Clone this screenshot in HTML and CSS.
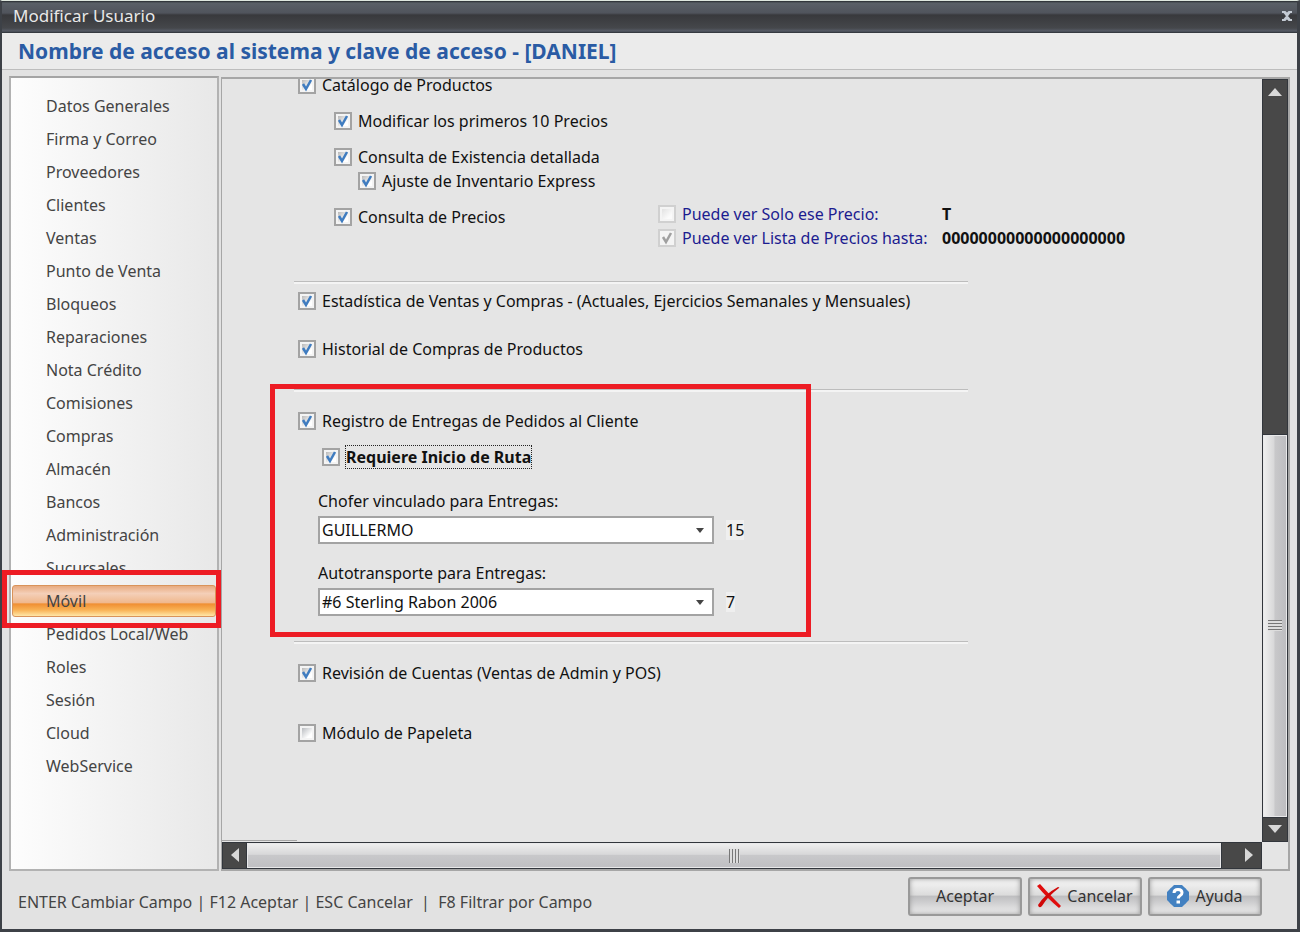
FILE: index.html
```
<!DOCTYPE html>
<html lang="es">
<head>
    <meta charset="utf-8">
    <title>Modificar Usuario</title>
    <link rel="stylesheet" href="styles.css">
</head>
<body>
    <div class="window">
        <div class="titlebar">
            <span>Modificar Usuario</span>
            <button class="close" aria-label="Cerrar">
                <svg width="12" height="10" viewBox="0 0 12 10"><path d="M1 1h3l2 2 2-2h3M1 9h3l2-2 2 2h3M3 1l6 8M9 1L3 9" fill="none" stroke="#c3cad3" stroke-width="2"/></svg>
            </button>
        </div>
        <h1 class="header">Nombre de acceso al sistema y clave de acceso - [DANIEL]</h1>

        <div class="content">
            <ul class="sidebar">
                <li><a href="#">Datos Generales</a></li>
                <li><a href="#">Firma y Correo</a></li>
                <li><a href="#">Proveedores</a></li>
                <li><a href="#">Clientes</a></li>
                <li><a href="#">Ventas</a></li>
                <li><a href="#">Punto de Venta</a></li>
                <li><a href="#">Bloqueos</a></li>
                <li><a href="#">Reparaciones</a></li>
                <li><a href="#">Nota Crédito</a></li>
                <li><a href="#">Comisiones</a></li>
                <li><a href="#">Compras</a></li>
                <li><a href="#">Almacén</a></li>
                <li><a href="#">Bancos</a></li>
                <li><a href="#">Administración</a></li>
                <li><a href="#">Sucursales</a></li>
                <li class="active"><a href="#">Móvil</a><div class="mark mark-menu"></div></li>
                <li><a href="#">Pedidos Local/Web</a></li>
                <li><a href="#">Roles</a></li>
                <li><a href="#">Sesión</a></li>
                <li><a href="#">Cloud</a></li>
                <li><a href="#">WebService</a></li>
            </ul>

            <div class="pane">
                <form class="form">
                    <label class="check"><input type="checkbox" checked><span>Catálogo de Productos</span></label>
                    <div class="level">
                        <label class="check gap"><input type="checkbox" checked><span>Modificar los primeros 10 Precios</span></label>
                        <label class="check gap"><input type="checkbox" checked><span>Consulta de Existencia detallada</span></label>
                        <label class="check indent"><input type="checkbox" checked><span>Ajuste de Inventario Express</span></label>
                        <div class="prices">
                            <label class="check price-main"><input type="checkbox" checked><span>Consulta de Precios</span></label>
                            <div class="price-options">
                                <label class="check disabled"><input type="checkbox" disabled><span>Puede ver Solo ese Precio:</span></label>
                                <b>T</b>
                                <label class="check disabled"><input type="checkbox" checked disabled><span>Puede ver Lista de Precios hasta:</span></label>
                                <b>00000000000000000000</b>
                            </div>
                        </div>
                    </div>

                    <hr>
                    <label class="check near"><input type="checkbox" checked><span>Estadística de Ventas y Compras - (Actuales, Ejercicios Semanales y Mensuales)</span></label>
                    <label class="check far"><input type="checkbox" checked><span>Historial de Compras de Productos</span></label>

                    <hr>
                    <div class="deliveries">
                        <label class="check"><input type="checkbox" checked><span>Registro de Entregas de Pedidos al Cliente</span></label>
                        <label class="check gap indent focused"><input type="checkbox" checked><span>Requiere Inicio de Ruta</span></label>
                        <div class="field">
                            <label for="driver">Chofer vinculado para Entregas:</label>
                            <div class="field-row">
                                <select id="driver"><option>GUILLERMO</option></select>
                                <span class="code">15</span>
                            </div>
                        </div>
                        <div class="field">
                            <label for="truck">Autotransporte para Entregas:</label>
                            <div class="field-row">
                                <select id="truck"><option>#6 Sterling Rabon 2006</option></select>
                                <span class="code">7</span>
                            </div>
                        </div>
                        <div class="mark mark-form"></div>
                    </div>

                    <hr>
                    <label class="check after-rule"><input type="checkbox" checked><span>Revisión de Cuentas (Ventas de Admin y POS)</span></label>
                    <label class="check last"><input type="checkbox"><span>Módulo de Papeleta</span></label>
                    <div class="end-line"></div>
                </form>

                <div class="vscroll">
                    <button aria-label="Subir"><svg width="14" height="8" viewBox="0 0 14 8"><path d="M0 8L7 0l7 8z" fill="#d8d8d8"/></svg></button>
                    <div class="vtrack"></div>
                    <div class="vthumb"><i class="grip"></i></div>
                    <button aria-label="Bajar"><svg width="14" height="8" viewBox="0 0 14 8"><path d="M0 0l7 8 7-8z" fill="#d8d8d8"/></svg></button>
                </div>
                <div class="hscroll">
                    <button aria-label="Izquierda"><svg width="8" height="14" viewBox="0 0 8 14"><path d="M8 0L0 7l8 7z" fill="#d8d8d8"/></svg></button>
                    <div class="hthumb"><i class="grip"></i></div>
                    <div class="htrack"></div>
                    <button aria-label="Derecha"><svg width="8" height="14" viewBox="0 0 8 14"><path d="M0 0l8 7-8 7z" fill="#d8d8d8"/></svg></button>
                </div>
            </div>
        </div>

        <div class="footer">
            <p>ENTER Cambiar Campo | F12 Aceptar | ESC Cancelar &nbsp;|&nbsp; F8 Filtrar por Campo</p>
            <div class="buttons">
                <button>Aceptar</button>
                <button>
                    <svg width="24" height="24" viewBox="0 0 24 24"><path d="M0 2L3 0Q11 9 24 22l-2 2Q11 15 0 2z" fill="#e00d0d"/><path d="M21 3Q23 3 22 4 11 12 5 22q-3 3-4-1Q8 10 21 3z" fill="#d00808"/></svg>
                    Cancelar
                </button>
                <button>
                    <svg width="22" height="22" viewBox="0 0 22 22"><path d="M7 0h8l7 7v8l-7 7H7l-7-7V7z" fill="#4381c1"/><circle cx="11" cy="11" r="10.5" fill="#4381c1"/><path d="M7 8q0-3.500 4-3.500t4 3.200q0 2-2 3-1.800 1-1.800 2.800" fill="none" stroke="#fff" stroke-width="3"/><path d="M9.500 15.500h3.500v3H9.500z" fill="#fff"/></svg>
                    Ayuda
                </button>
            </div>
        </div>
    </div>
</body>
</html>
```
FILE: styles.css
```
* {
    box-sizing: border-box;
}
body {
    margin: 0;
    font-family: "Noto Sans", sans-serif;
    font-size: 16px;
    line-height: 24px;
    color: #111;
}
button, select {
    font: inherit;
}
.window {
    display: flex;
    flex-direction: column;
    min-height: 100vh;
    border: 3px solid #3d4147;
    border-top: 1px solid #dfe8df;
    border-left-width: 2px;
    background: #e2e2e2;
}
.titlebar {
    display: flex;
    justify-content: space-between;
    align-items: center;
    height: 32px;
    padding: 0 4px 2px 11px;
    background: linear-gradient(#25292d 0, #5a6067 2px, #50545c 12px, #38393c 14px, #45474b 27px, #565b66 30px, #2b2f34 32px);
    color: #e8e8e8;
    font-size: 17px;
}
.close {
    display: flex;
    padding: 0;
    border: none;
    background: none;
}
.header {
    margin: 0;
    padding: 2px 16px;
    height: 37px;
    border-bottom: 1px solid #bdbdbd;
    background: #ebebeb;
    color: #2a5ba4;
    font-size: 21px;
    line-height: 32px;
    font-weight: bold;
}
.content {
    display: flex;
    flex: 1;
    gap: 2px;
    padding: 6px 7px 0;
}
.sidebar {
    width: 210px;
    margin: 0;
    padding: 12px 1px;
    list-style: none;
    border: 2px solid #b2b2b2;
    border-top-color: #a4a4a4;
    background: linear-gradient(90deg, #fdfdfd, #e8e8e8);
}
.sidebar li {
    position: relative;
    height: 33px;
}
.sidebar a {
    display: block;
    padding: 0 34px;
    line-height: 32px;
    color: #444;
    text-decoration: none;
    white-space: nowrap;
}
.sidebar .active a {
    padding: 0 33px;
    border: 1px solid #d9935a;
    border-radius: 3px;
    line-height: 30px;
    background: linear-gradient(#e8ab80, #f4cfb8 25%, #f0b88e 55%, #f08f33 60%, #f9b255 80%, #ffe7a8);
}
.mark {
    position: absolute;
    z-index: 1;
    border: 5px solid #ed1c24;
    pointer-events: none;
}
.mark-menu {
    top: -15px;
    bottom: -10px;
    left: -10px;
    right: -5px;
}
.mark-form {
    top: -25px;
    bottom: -21px;
    left: -28px;
    width: 541px;
}
.pane {
    display: grid;
    flex: 1;
    grid-template-columns: 1fr 26px;
    grid-template-rows: 1fr 27px;
    min-width: 0;
    margin-top: 1px;
    border: 2px solid #a6a6a6;
    border-left-width: 1px;
    background: #e5e5e5;
}
.form {
    display: flex;
    flex-direction: column;
    overflow: hidden;
    padding: 0 76px;
}
.form > .check:first-child {
    margin-top: -6px;
}
.check {
    display: flex;
    align-items: center;
    gap: 6px;
    height: 24px;
    white-space: nowrap;
}
.check input {
    appearance: none;
    flex: none;
    width: 18px;
    height: 18px;
    margin: 0;
    border: 2px solid #a3a3a3;
    background: linear-gradient(135deg, #b9bcc0, #fff 75%) center / 10px 10px no-repeat #f4f4f4;
}
.check input:checked {
    background: url("data:image/svg+xml,%3Csvg xmlns='http://www.w3.org/2000/svg' viewBox='0 0 14 14'%3E%3Cpath d='M3 6l3 5 5-9' fill='none' stroke='%233f7cc0' stroke-width='2.500'/%3E%3C/svg%3E"), linear-gradient(135deg, #b9b9b9, #fff 75%) center / 10px 10px no-repeat #f4f4f4;
}
.check input:disabled {
    border-color: #d0d0d0;
    background: linear-gradient(135deg, #e2e2e2, #fbfbfb 75%) center / 10px 10px no-repeat #f4f4f4;
}
.check input:disabled:checked {
    background: url("data:image/svg+xml,%3Csvg xmlns='http://www.w3.org/2000/svg' viewBox='0 0 14 14'%3E%3Cpath d='M3 6l3 5 5-9' fill='none' stroke='%23a0a0a0' stroke-width='2.500'/%3E%3C/svg%3E"), #f4f4f4;
}
.disabled {
    color: #1c1c90;
}
.level {
    padding-left: 36px;
}
.gap {
    margin-top: 12px;
}
.indent {
    margin-left: 24px;
}
.prices {
    display: flex;
    margin-top: 9px;
}
.price-main {
    width: 324px;
    margin-top: 3px;
}
.price-options {
    display: grid;
    grid-template-columns: 284px auto;
}
hr {
    width: 674px;
    height: 3px;
    margin: 28px 0 0 -4px;
    border: solid #f4f4f4;
    border-width: 0 0 2px;
    background: #bdbdbd;
}
.level + hr {
    margin-top: 31px;
}
.near {
    margin-top: 5px;
}
.far {
    margin-top: 24px;
}
.deliveries {
    position: relative;
    margin-top: 17px;
}
.deliveries + hr {
    margin-top: 25px;
}
.focused {
    font-weight: bold;
}
.focused span {
    line-height: 22px;
    outline: 1px dotted #222;
}
.field {
    margin: 17px 0 0 20px;
}
.focused + .field {
    margin-top: 20px;
}
.field label {
    display: block;
}
.field-row {
    display: flex;
    align-items: center;
    gap: 12px;
    margin-top: 3px;
}
.field select {
    appearance: none;
    width: 396px;
    height: 28px;
    padding: 0 20px 2px 2px;
    border: 2px solid #a3a3a3;
    border-radius: 0;
    color: #111;
    background: url("data:image/svg+xml,%3Csvg xmlns='http://www.w3.org/2000/svg' viewBox='0 0 8 5'%3E%3Cpath d='M0 0h8L4 5z' fill='%23444'/%3E%3C/svg%3E") right 8px center / 8px 5px no-repeat #fff;
}
.code {
    line-height: 20px;
    background: #efefef;
}
.after-rule {
    margin-top: 17px;
}
.last {
    margin-top: 36px;
}
.end-line {
    width: 75px;
    height: 1px;
    margin: auto 0 1px -76px;
    background: #a6a6a6;
}
.vscroll, .hscroll {
    display: flex;
    background: #484848;
    border: 1px solid #32363c;
}
.vscroll {
    flex-direction: column;
}
.vscroll button, .hscroll button {
    display: flex;
    flex: none;
    align-items: center;
    justify-content: center;
    width: 24px;
    height: 24px;
    padding: 0;
    border: none;
    background: none;
}
.vtrack {
    flex: 332;
}
.vthumb, .hthumb {
    display: flex;
    align-items: center;
    justify-content: center;
    border: 1px solid #e9e9ea;
}
.vthumb {
    flex: 382;
    outline: 1px solid #32363c;
    background: linear-gradient(90deg, #eee, #d8d8d9 45%, #c8c8ca 50%, #bdbdc0);
}
.hthumb {
    flex: 972;
    outline: 1px solid #32363c;
    background: linear-gradient(#eee, #d8d8d9 45%, #c8c8ca 50%, #c0c0c3);
}
.htrack {
    flex: 16;
}
.grip {
    width: 14px;
    height: 11px;
    background: repeating-linear-gradient(#777 0 1px, #ddd 1px 3px);
}
.hthumb .grip {
    width: 11px;
    height: 14px;
    background: repeating-linear-gradient(90deg, #777 0 1px, #ddd 1px 3px);
}
.footer {
    display: flex;
    justify-content: space-between;
    padding: 6px 35px 13px 16px;
    color: #444;
}
.footer p {
    margin: 13px 0 0;
}
.buttons {
    display: flex;
    gap: 6px;
}
.buttons button {
    display: flex;
    align-items: center;
    justify-content: center;
    gap: 6px;
    width: 114px;
    height: 39px;
    padding: 0 0 2px;
    border: 2px solid #999;
    border-radius: 3px;
    box-shadow: inset 0 0 5px #999;
    background: linear-gradient(#f7f7f7, #dcdcdc 45%, #bfbfc1 50%, #ededed);
    color: #333;
}
```
